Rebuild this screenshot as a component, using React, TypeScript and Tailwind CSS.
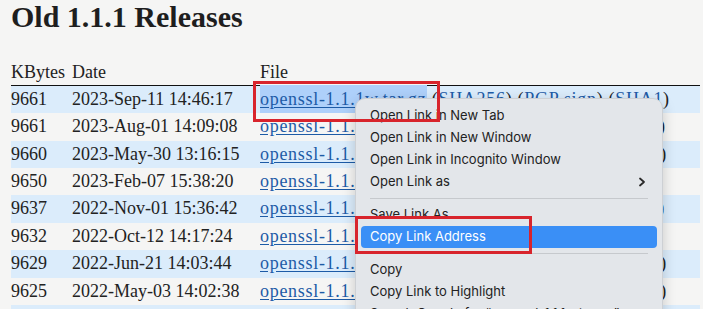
import React from 'react'

type Release = {
  kbytes: number
  date: string
  file: string
}

const RELEASES: Release[] = [
  { kbytes: 9661, date: '2023-Sep-11 14:46:17', file: 'openssl-1.1.1w.tar.gz' },
  { kbytes: 9661, date: '2023-Aug-01 14:09:08', file: 'openssl-1.1.1v.tar.gz' },
  { kbytes: 9660, date: '2023-May-30 13:16:15', file: 'openssl-1.1.1u.tar.gz' },
  { kbytes: 9650, date: '2023-Feb-07 15:38:20', file: 'openssl-1.1.1t.tar.gz' },
  { kbytes: 9637, date: '2022-Nov-01 15:36:42', file: 'openssl-1.1.1s.tar.gz' },
  { kbytes: 9632, date: '2022-Oct-12 14:17:24', file: 'openssl-1.1.1r.tar.gz' },
  { kbytes: 9629, date: '2022-Jun-21 14:03:44', file: 'openssl-1.1.1p.tar.gz' },
  { kbytes: 9625, date: '2022-May-03 14:02:38', file: 'openssl-1.1.1o.tar.gz' },
]

const MenuItem: React.FC<{ label: string; active?: boolean; submenu?: boolean }> = ({
  label,
  active,
  submenu,
}) => (
  <div
    className={
      active
        ? 'mx-[5px] px-[9px] h-[22px] flex items-center justify-between rounded-[4px] bg-[#3a8ff6] text-white'
        : 'px-[14px] h-[22px] flex items-center justify-between text-[#222]'
    }
  >
    <span>{label}</span>
    {submenu && (
      <svg width="8" height="10" viewBox="0 0 8 10" className="mr-[2px]">
        <polyline
          points="2,1.5 6,5 2,8.5"
          fill="none"
          stroke="#2a2a2a"
          strokeWidth="1.8"
          strokeLinecap="round"
          strokeLinejoin="round"
        />
      </svg>
    )}
  </div>
)

const Separator = () => (
  <div className="h-[11px] flex items-center px-[14px]">
    <div className="h-px w-full bg-[#c6c9cd]" />
  </div>
)

export default function App() {
  return (
    <div className="relative h-[309px] w-[703px] overflow-hidden bg-[#f5f5f4] text-[#222] font-['Liberation_Serif',serif]">
      <div className="pl-[11px] pr-[3px]">
        <h1 className="h-[34px] text-[30px] leading-[34px] font-bold text-[#1e1e1e]">
          Old 1.1.1 Releases
        </h1>

        <div className="mt-[24.5px] text-[18px]">
          <div className="grid grid-cols-[61px_188px_1fr] h-[27.4px] leading-[27.4px] border-b-[1.5px] border-[#111]">
            <div>KBytes</div>
            <div>Date</div>
            <div>File</div>
          </div>
          {RELEASES.map((r, i) => (
            <div
              key={r.file}
              className={
                'grid grid-cols-[61px_188px_1fr] h-[27.4px] leading-[27.4px] whitespace-nowrap ' +
                (i % 2 === 0 ? 'bg-[#dbecfb]' : '')
              }
            >
              <div>{r.kbytes}</div>
              <div>{r.date}</div>
              <div className="tracking-[0.7px]">
                <a
                  href="#"
                  className={
                    'text-[#1d5ba6] underline underline-offset-2 ' +
                    (i === 0 ? 'bg-[#aed0fa] py-[4px]' : '')
                  }
                >
                  {r.file}
                </a>{' '}
                (<a href="#" className="text-[#1d5ba6] underline underline-offset-2">SHA256</a>) (
                <a href="#" className="text-[#1d5ba6] underline underline-offset-2">PGP sign</a>) (
                <a href="#" className="text-[#1d5ba6] underline underline-offset-2">SHA1</a>)
              </div>
            </div>
          ))}
          {/* next striped row, only its top edge is in view */}
          <div className="h-[27.4px] bg-[#dbecfb]" />
        </div>
      </div>

      {/* right-click menu */}
      <div className="absolute left-[355px] top-[97.5px] w-[308px] h-[240px] rounded-[10px] bg-[#e3e6ea] border border-[#cdd0d4] shadow-[0_4px_14px_rgba(0,0,0,0.18)] pt-[6px] text-[13px] font-['Inter',sans-serif]">
        <MenuItem label="Open Link in New Tab" />
        <MenuItem label="Open Link in New Window" />
        <MenuItem label="Open Link in Incognito Window" />
        <MenuItem label="Open Link as" submenu />
        <Separator />
        <MenuItem label="Save Link As..." />
        <MenuItem label="Copy Link Address" active />
        <Separator />
        <MenuItem label="Copy" />
        <MenuItem label="Copy Link to Highlight" />
        <MenuItem label="Search Google for “openssl-1.1.1w.tar.gz”" />
      </div>

      {/* annotation boxes */}
      <div className="absolute left-[253px] top-[81px] w-[187px] h-[41px] border-[3px] border-[#d8242c]" />
      <div className="absolute left-[355px] top-[215.5px] w-[177px] h-[38px] border-[3px] border-[#d8242c]" />
    </div>
  )
}
